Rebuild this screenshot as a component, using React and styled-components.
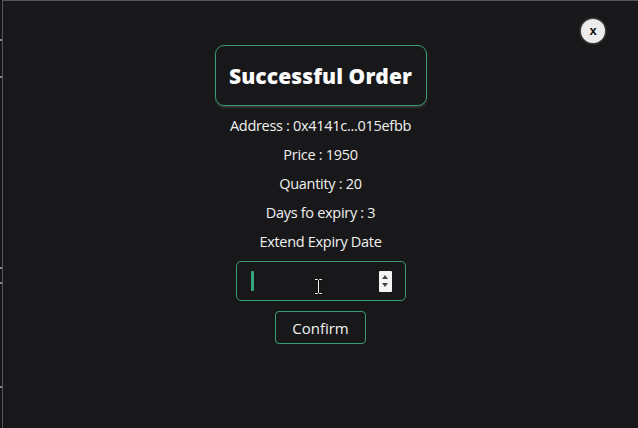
import React from "react";
import styled, { createGlobalStyle } from "styled-components";

const Global = createGlobalStyle`
  html, body { margin: 0; padding: 0; background: #18181a; }
  body { font-family: "Open Sans", "Noto Sans", sans-serif; color: #f2f2f2; }
  #root { width: 638px; height: 428px; overflow: hidden; }
`;

const Screen = styled.div`
  display: flex;
  width: 638px;
  height: 428px;
  background: #18181a;
`;

const LeftStrip = styled.div`
  width: 2px;
  display: flex;
  flex-direction: column;
  background: #141416;
`;

const Tick = styled.div`
  height: 2px;
  margin-top: ${(p) => p.$gap}px;
  background: #8a8a8e;
`;

const Modal = styled.div`
  position: relative;
  flex: 1;
  border-left: 1px solid #55555a;
  border-top: 1px solid #55555a;
  background: #18181a;
  display: flex;
  flex-direction: column;
  align-items: center;
  padding-top: 44px;
  box-sizing: border-box;
`;

const Close = styled.div`
  position: absolute;
  top: 18px;
  right: 33px;
  width: 24px;
  height: 24px;
  border-radius: 50%;
  background: #ececec;
  box-shadow: 0 0 2px 1px rgba(255,255,255,0.25);
  color: #111;
  font: 700 13px "Liberation Sans", Arial, sans-serif;
  display: flex;
  align-items: center;
  justify-content: center;
  line-height: 1;
  padding-bottom: 1px;
  box-sizing: border-box;
`;

const TitleBox = styled.div`
  width: 212px;
  height: 61px;
  box-sizing: border-box;
  border: 1px solid #3b9a78;
  border-radius: 9px;
  display: flex;
  align-items: center;
  justify-content: center;
  box-shadow: 0 2px 2px rgba(255,255,255,0.12);
  margin-bottom: 5px;
`;

const Title = styled.h1`
  margin: 0;
  font-family: "Open Sans", sans-serif;
  font-weight: 800;
  font-size: 21px;
  letter-spacing: 0.1px;
  color: #fafafa;
`;

const Line = styled.p`
  margin: 0;
  height: 29px;
  line-height: 29px;
  font-size: 14.5px;
  letter-spacing: -0.3px;
  font-weight: 400;
  color: #f0f0f0;
  text-align: center;
`;

const InputBox = styled.div`
  margin-top: 5px;
  width: 170px;
  height: 40px;
  box-sizing: border-box;
  border: 1px solid #3b9a78;
  border-radius: 5px;
  display: flex;
  align-items: center;
  padding: 0 13px 0 14px;
  position: relative;
`;

const Caret = styled.span`
  width: 3px;
  height: 20px;
  background: #36a57e;
  border-radius: 1px;
`;

const Cursor = styled.svg`
  position: absolute;
  left: 77px;
  top: 16px;
`;

const Spinner = styled.div`
  margin-left: auto;
  width: 13px;
  height: 21px;
  background: #f4f4f4;
  border-radius: 1px;
  display: flex;
  flex-direction: column;
  align-items: center;
  justify-content: space-evenly;
`;

const Arrow = styled.span`
  width: 0;
  height: 0;
  border-left: 3px solid transparent;
  border-right: 3px solid transparent;
  ${(p) => (p.$up ? "border-bottom: 4px solid #444;" : "border-top: 4px solid #444;")}
`;

const Button = styled.button`
  margin-top: 10px;
  width: 91px;
  height: 33px;
  box-sizing: border-box;
  background: transparent;
  border: 1px solid #3b9a78;
  border-radius: 4px;
  color: #f2f2f2;
  font-family: "Open Sans", sans-serif;
  font-size: 15px;
  padding: 0;
`;

export default function App() {
  return (
    <>
      <Global />
      <Screen>
        <LeftStrip>
          <Tick $gap={39} />
          <Tick $gap={35} />
          <Tick $gap={189} />
          <Tick $gap={13} />
          <Tick $gap={102} />
        </LeftStrip>
        <Modal>
          <Close>x</Close>
          <TitleBox>
            <Title>Successful Order</Title>
          </TitleBox>
          <Line>Address : 0x4141c...015efbb</Line>
          <Line>Price : 1950</Line>
          <Line>Quantity : 20</Line>
          <Line>Days fo expiry : 3</Line>
          <Line>Extend Expiry Date</Line>
          <InputBox>
            <Caret />
            <Cursor width="9" height="17" viewBox="0 0 9 17">
              <path d="M1 1.5h2.5l1 1 1-1H8M4.5 2.5v12M1 15.5h2.5l1-1 1 1H8" fill="none" stroke="#111" strokeWidth="2.4" />
              <path d="M1 1.5h2.5l1 1 1-1H8M4.5 2.5v12M1 15.5h2.5l1-1 1 1H8" fill="none" stroke="#f4f4f4" strokeWidth="1" />
            </Cursor>
            <Spinner>
              <Arrow $up />
              <Arrow />
            </Spinner>
          </InputBox>
          <Button>Confirm</Button>
        </Modal>
      </Screen>
    </>
  );
}
